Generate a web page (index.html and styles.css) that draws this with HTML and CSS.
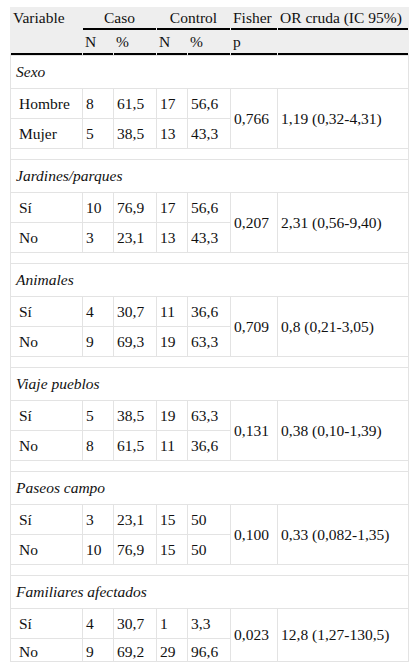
FILE: index.html
```html
<!DOCTYPE html>
<html lang="es">
<head>
<meta charset="utf-8">
<title>Tabla</title>
<link rel="stylesheet" href="styles.css">
</head>
<body>
<div class="wrap">
<table class="tbl">
  <colgroup>
    <col class="c-var"><col class="c-n"><col class="c-p"><col class="c-n"><col class="c-p"><col class="c-f"><col class="c-or">
  </colgroup>
  <thead>
    <tr class="h1">
      <th class="var" rowspan="2">Variable</th>
      <th class="grp" colspan="2">Caso</th>
      <th class="grp" colspan="2">Control</th>
      <th>Fisher</th>
      <th>OR cruda (IC 95%)</th>
    </tr>
    <tr class="h2">
      <th>N</th><th>%</th><th>N</th><th>%</th><th>p</th><th></th>
    </tr>
  </thead>
  <tbody>
    <tr class="sec"><td colspan="7">Sexo</td></tr>
    <tr class="row"><td class="lab">Hombre</td><td>8</td><td>61,5</td><td>17</td><td>56,6</td><td rowspan="2">0,766</td><td rowspan="2">1,19 (0,32-4,31)</td></tr>
    <tr class="row"><td class="lab">Mujer</td><td>5</td><td>38,5</td><td>13</td><td>43,3</td></tr>
    <tr class="gap"><td colspan="7"></td></tr>

    <tr class="sec"><td colspan="7">Jardines/parques</td></tr>
    <tr class="row"><td class="lab">Sí</td><td>10</td><td>76,9</td><td>17</td><td>56,6</td><td rowspan="2">0,207</td><td rowspan="2">2,31 (0,56-9,40)</td></tr>
    <tr class="row"><td class="lab">No</td><td>3</td><td>23,1</td><td>13</td><td>43,3</td></tr>
    <tr class="gap"><td colspan="7"></td></tr>

    <tr class="sec"><td colspan="7">Animales</td></tr>
    <tr class="row"><td class="lab">Sí</td><td>4</td><td>30,7</td><td>11</td><td>36,6</td><td rowspan="2">0,709</td><td rowspan="2">0,8 (0,21-3,05)</td></tr>
    <tr class="row"><td class="lab">No</td><td>9</td><td>69,3</td><td>19</td><td>63,3</td></tr>
    <tr class="gap"><td colspan="7"></td></tr>

    <tr class="sec"><td colspan="7">Viaje pueblos</td></tr>
    <tr class="row"><td class="lab">Sí</td><td>5</td><td>38,5</td><td>19</td><td>63,3</td><td rowspan="2">0,131</td><td rowspan="2">0,38 (0,10-1,39)</td></tr>
    <tr class="row"><td class="lab">No</td><td>8</td><td>61,5</td><td>11</td><td>36,6</td></tr>
    <tr class="gap"><td colspan="7"></td></tr>

    <tr class="sec"><td colspan="7">Paseos campo</td></tr>
    <tr class="row"><td class="lab">Sí</td><td>3</td><td>23,1</td><td>15</td><td>50</td><td rowspan="2">0,100</td><td rowspan="2">0,33 (0,082-1,35)</td></tr>
    <tr class="row"><td class="lab">No</td><td>10</td><td>76,9</td><td>15</td><td>50</td></tr>
    <tr class="gap"><td colspan="7"></td></tr>

    <tr class="sec"><td colspan="7">Familiares afectados</td></tr>
    <tr class="row"><td class="lab">Sí</td><td>4</td><td>30,7</td><td>1</td><td>3,3</td><td rowspan="2">0,023</td><td rowspan="2">12,8 (1,27-130,5)</td></tr>
    <tr class="row last"><td class="lab">No</td><td>9</td><td>69,2</td><td>29</td><td>96,6</td></tr>
  </tbody>
</table>
</div>
</body>
</html>
```

FILE: styles.css
```css
html, body {
  margin: 0;
  padding: 0;
  background: #fff;
}
.wrap {
  padding: 7px 0 0 10px;
}
.tbl {
  width: 399px;
  table-layout: fixed;
  border-collapse: separate;
  border-spacing: 1px;
  background: linear-gradient(#eeeeee 0, #eeeeee 47px, #e3e3e3 47px, #e3e3e3 100%);
  font-family: "Liberation Serif", "Times New Roman", serif;
  font-size: 15.5px;
  line-height: 18px;
  color: #111;
}
.c-var { width: 71px; }
.c-n { width: 30px; }
.c-p { width: 42px; }
.c-f { width: 46px; }
.c-or { width: 130px; }

.tbl th {
  background: #eeeeee;
  font-weight: normal;
  text-align: left;
  padding: 1px 2px 0 2px;
  border-bottom: 2px solid #000;
  white-space: nowrap;
  vertical-align: top;
}
.tbl th.grp { text-align: center; }
.tbl .h1 th { height: 19px; }
.tbl .h2 th { height: 20px; padding-top: 2px; }

.tbl td {
  background: #fff;
  padding: 0 3px;
  white-space: nowrap;
  vertical-align: middle;
}
.tbl .row td { height: 29px; }
.tbl .row.last td { height: 22px; vertical-align: bottom; }
.tbl .row td.lab { padding-left: 8px; }
.tbl .sec td {
  height: 32px;
  font-style: italic;
  padding-left: 5px;
}
.tbl .gap td { height: 10px; padding: 0; }
```
